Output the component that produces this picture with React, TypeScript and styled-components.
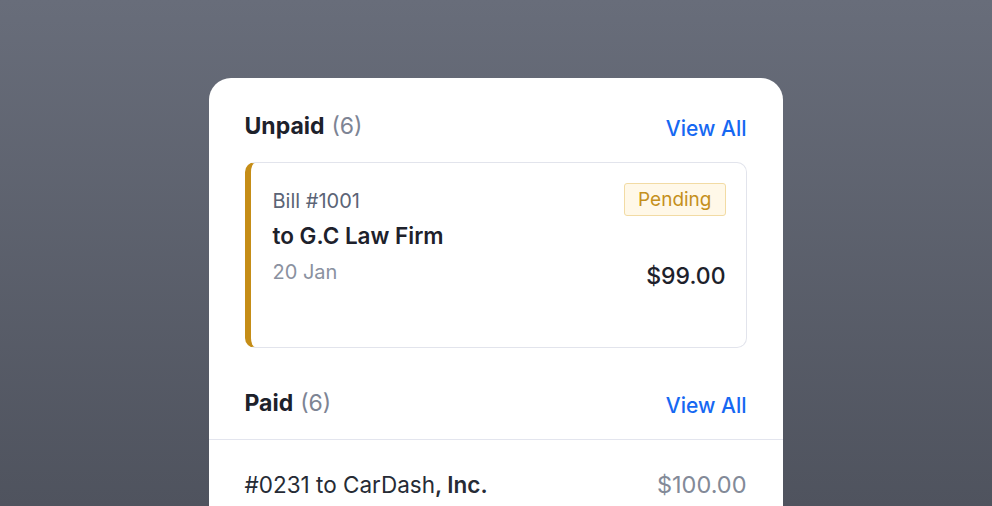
import styled, { createGlobalStyle } from "styled-components";

const GlobalStyle = createGlobalStyle`
    html, body {
        margin: 0;
        padding: 0;
        height: 100%;
    }
    body {
        font-family: Inter, Lato, sans-serif;
        -webkit-font-smoothing: antialiased;
    }
`;

const Page = styled.div`
    height: 506px;
    overflow: hidden;
    background: linear-gradient(180deg, #686d7a 0%, #4f535e 100%);
    display: flex;
    justify-content: center;
    padding-top: 78px;
    box-sizing: border-box;
`;

const Panel = styled.div`
    width: 574px;
    margin-left: -1px;
    background: #ffffff;
    border-radius: 22px 22px 0 0;
    padding-top: 33px;
    display: flex;
    flex-direction: column;
    height: 520px;
`;

const SectionHeader = styled.div<{ $divider?: boolean }>`
    display: flex;
    justify-content: space-between;
    align-items: center;
    padding: 0 36px;
    height: 30px;
    ${(p) => p.$divider && `
        padding-bottom: 21px;
        border-bottom: 1.5px solid #e3e5ee;
    `}
`;

const SectionTitle = styled.div`
    font-size: 23px;
    font-weight: 700;
    color: #1d212b;
`;

const Count = styled.span`
    font-weight: 400;
    color: #7d8494;
    margin-left: 7px;
`;

const ViewAll = styled.a`
    font-size: 21px;
    font-weight: 500;
    color: #1668f2;
    text-decoration: none;
    margin-top: 5px;
`;

const BillCard = styled.div`
    margin: 21px 36px 40px;
    height: 186px;
    box-sizing: border-box;
    border: 1.5px solid #e2e4ec;
    border-left: 6px solid #c58d17;
    border-radius: 10px;
    padding: 20px 20px 0 22px;
`;

const Row = styled.div<{ $align?: string }>`
    display: flex;
    justify-content: space-between;
    align-items: ${(p) => p.$align || "center"};
`;

const BillNumber = styled.div`
    font-size: 20px;
    line-height: 24px;
    margin-top: 2px;
    color: #5b6476;
`;

const Badge = styled.div`
    height: 33px;
    box-sizing: border-box;
    padding: 0 13px;
    display: flex;
    align-items: center;
    font-size: 19px;
    color: #c5901c;
    background: #fff8e8;
    border: 1px solid #f2dba4;
    border-radius: 3px;
`;

const Recipient = styled.div`
    margin-top: 4px;
    font-size: 22.5px;
    font-weight: 600;
    line-height: 32px;
    color: #1d212b;
`;

const DateText = styled.div`
    margin-top: 4px;
    font-size: 20px;
    color: #8a91a0;
    line-height: 32px;
`;

const Amount = styled.div`
    font-size: 23px;
    font-weight: 500;
    line-height: 32px;
    color: #1d212b;
    margin-bottom: -4px;
`;

const PaidRow = styled.div`
    display: flex;
    justify-content: space-between;
    align-items: center;
    padding: 30px 36px 0;
    font-size: 22.5px;
`;

const PaidLabel = styled.div`
    color: #262b35;
`;

const Strong = styled.span`
    font-weight: 600;
`;

const PaidAmount = styled.div`
    color: #838a98;
    font-size: 23.5px;
`;

export default function App() {
    return (
        <>
            <GlobalStyle />
            <Page>
                <Panel>
                    <SectionHeader>
                        <SectionTitle>
                            Unpaid<Count>(6)</Count>
                        </SectionTitle>
                        <ViewAll href="#">View All</ViewAll>
                    </SectionHeader>
                    <BillCard>
                        <Row>
                            <BillNumber>Bill #1001</BillNumber>
                            <Badge>Pending</Badge>
                        </Row>
                        <Recipient>to G.C Law Firm</Recipient>
                        <Row $align="flex-end">
                            <DateText>20 Jan</DateText>
                            <Amount>$99.00</Amount>
                        </Row>
                    </BillCard>
                    <SectionHeader $divider>
                        <SectionTitle>
                            Paid<Count>(6)</Count>
                        </SectionTitle>
                        <ViewAll href="#">View All</ViewAll>
                    </SectionHeader>
                    <PaidRow>
                        <PaidLabel>
                            #0231 to CarDash<Strong>, Inc.</Strong>
                        </PaidLabel>
                        <PaidAmount>$100.00</PaidAmount>
                    </PaidRow>
                </Panel>
            </Page>
        </>
    );
}
